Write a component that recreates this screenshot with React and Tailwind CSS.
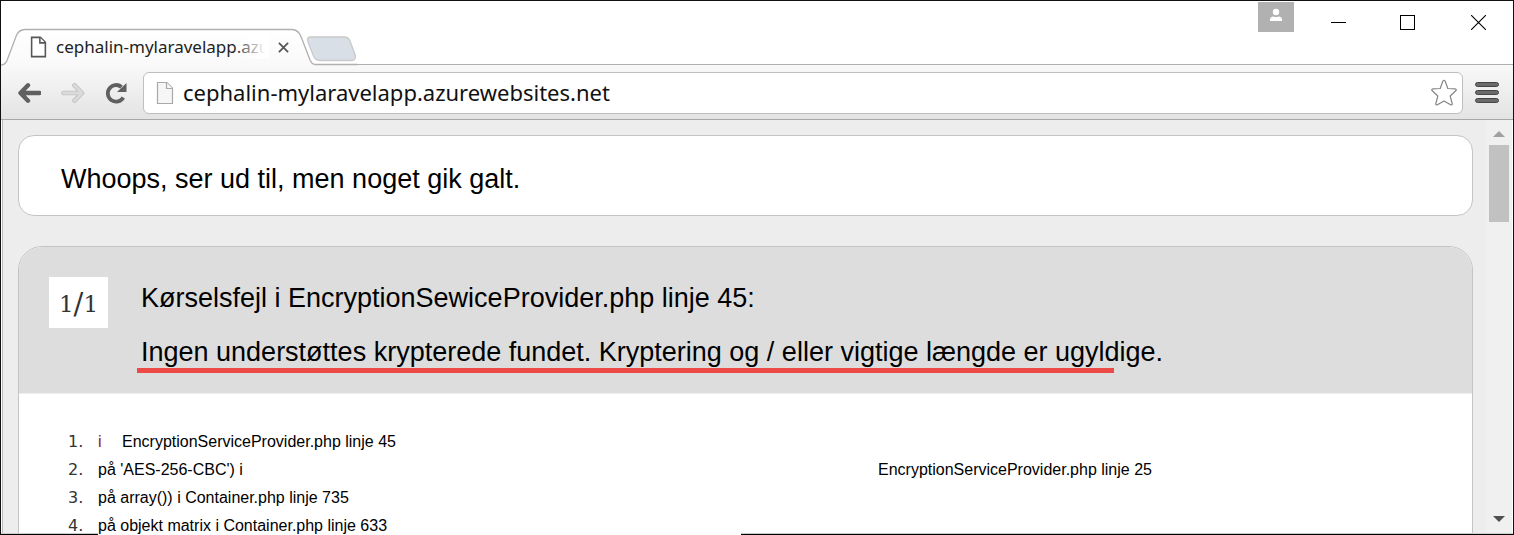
import React from 'react';

const frames = [
  { before: 'i', source: 'EncryptionServiceProvider.php linje 45', gap: 'w-6', accent: true },
  { before: "på 'AES-256-CBC') i", source: 'EncryptionServiceProvider.php linje 25', gap: 'w-[780px]' },
  { before: 'på array()) i Container.php linje 735' },
  { before: 'på objekt matrix i Container.php linje 633' },
];

function PageIcon({ className, stroke, width, fill }) {
  return (
    <svg viewBox="0 0 18 24" className={className} fill={fill} stroke={stroke} strokeWidth={width} aria-hidden="true">
      <path d="M1.5 1.5h9.5l5.5 5.5v15.500h-15z" />
      <path d="M10.500 1.500v6h6" />
    </svg>
  );
}

function TabStrip() {
  return (
    <header className="flex h-16 shrink-0 items-stretch bg-white">
      <div className="relative flex h-16 w-[357px] shrink-0 items-end">
        <svg viewBox="0 0 357 65" className="absolute left-0 top-0 h-[65px] w-[357px]" aria-hidden="true">
          <defs>
            <linearGradient id="tab" x1="0" y1="0" x2="0" y2="1">
              <stop offset="0" stopColor="#ffffff" />
              <stop offset="1" stopColor="#f9f9f9" />
            </linearGradient>
          </defs>
          <path d="M309 36h34q4.500 0 6 4l5 13.500q1.500 5.500-3 6h-32q-4.500 0-6.500-4.500l-5.500-14q-1.500-5 2-5z" fill="#d9dfe7" stroke="#c9c9c9" strokeWidth="1.300" />
          <path d="M0 64.500q4 0 6-5l9-24q2.500-7 9-7h267q6 0 9 7l9 23.500q2 5.500 5 5.500v1h-314z" fill="url(#tab)" />
          <path d="M0 64q4 0 6-4.500l9-24q2.500-7 9-7h267q6 0 9 7l9 23.500q2 4.500 5 4.500h43" fill="none" stroke="#b0b0b0" strokeWidth="1.300" />
        </svg>
        <div className="relative flex h-9 w-[295px] items-center pl-[29px]">
          <PageIcon className="h-[22px] w-[17px] shrink-0" stroke="#555555" width="1.700" fill="#ffffff" />
          <span className="relative ml-[9px] shrink-0 whitespace-nowrap text-[17px] leading-6 text-[#222222]">
            cephalin-mylaravelapp.azu
            <span className="absolute right-0 top-0 h-6 w-9 bg-linear-to-r from-white/0 to-white to-90%" />
          </span>
          <button type="button" aria-label="Close tab" className="ml-1 flex h-5 w-5 items-center justify-center">
            <svg viewBox="0 0 12 12" className="h-[11px] w-[11px]" stroke="#555555" strokeWidth="1.900" aria-hidden="true">
              <path d="M1 1l10 10M11 1L1 11" />
            </svg>
          </button>
        </div>
      </div>
      <div className="flex flex-1 items-start justify-end border-b border-[#b0b0b0]">
        <button type="button" aria-label="Profile" className="mt-px flex h-[30px] w-9 items-center justify-center bg-[#b1b1b1]">
          <svg viewBox="0 0 14 14" className="mb-1 h-[14px] w-[14px]" fill="#ffffff" aria-hidden="true">
            <circle cx="7" cy="4" r="3.200" />
            <path d="M1 13v-1.500Q1 8.700 4.500 8.400q2.500 1 5 0Q13 8.700 13 11.500V13z" />
          </svg>
        </button>
        <button type="button" aria-label="Minimize" className="ml-7 flex h-[42px] w-8 items-center justify-center">
          <span className="h-px w-[15px] bg-black" />
        </button>
        <button type="button" aria-label="Maximize" className="ml-[37px] flex h-[42px] w-8 items-center justify-center">
          <span className="h-[15px] w-[15px] border border-black" />
        </button>
        <button type="button" aria-label="Close" className="mr-[19px] ml-[39px] flex h-[42px] w-8 items-center justify-center">
          <svg viewBox="0 0 15 15" className="h-[15px] w-[15px]" stroke="#000000" strokeWidth="1.100" aria-hidden="true">
            <path d="M0 0l15 15M15 0L0 15" />
          </svg>
        </button>
      </div>
    </header>
  );
}

function Toolbar() {
  return (
    <nav className="flex h-[55px] shrink-0 items-center border-b border-[#a8a8a8] bg-linear-to-b from-[#f9f9f9] to-[#e3e3e3] pl-4 pt-px">
      <button type="button" aria-label="Back" className="h-6 w-6">
        <svg viewBox="0 0 24 24" className="h-6 w-6" fill="none" stroke="#606060" strokeWidth="4.400" strokeLinecap="round" strokeLinejoin="round" aria-hidden="true">
          <path d="M11 4.300L3.500 12l7.500 7.700M4.500 12h18" />
        </svg>
      </button>
      <button type="button" aria-label="Forward" className="ml-5 h-6 w-6">
        <svg viewBox="0 0 24 24" className="h-6 w-6" fill="none" strokeLinecap="round" strokeLinejoin="round" aria-hidden="true">
          <path d="M13.500 4.300L21 12l-7.500 7.700M20 12H2.500" stroke="#c2c2c2" strokeWidth="4.600" />
          <path d="M13.500 4.300L21 12l-7.500 7.700M20 12H2.500" stroke="#dadada" strokeWidth="2.800" />
        </svg>
      </button>
      <button type="button" aria-label="Reload" className="ml-[19px] h-6 w-6">
        <svg viewBox="0 0 24 24" className="h-6 w-6" aria-hidden="true">
          <path d="M19.300 16.500A8.300 8.300 0 1 1 17.500 6" fill="none" stroke="#606060" strokeWidth="3.800" />
          <path d="M22.500 2v9h-9.500z" fill="#606060" />
        </svg>
      </button>
      <label className="ml-[15px] flex h-[42px] flex-1 items-center rounded-md border border-[#bfbfbf] bg-white pl-3 pr-1">
        <PageIcon className="h-6 w-[18px] shrink-0" stroke="#a9a9a9" width="1.200" fill="#f6f6f6" />
        <input
          type="text"
          aria-label="Address"
          defaultValue="cephalin-mylaravelapp.azurewebsites.net"
          className="ml-[9px] h-9 min-w-0 flex-1 bg-transparent pb-[2px] text-[22px] text-[#111111] outline-none"
        />
        <button type="button" aria-label="Bookmark" className="h-7 w-7">
          <svg viewBox="0 0 28 28" className="h-7 w-7" fill="#ffffff" stroke="#858585" strokeWidth="1.200" strokeLinejoin="round" aria-hidden="true">
            <path d="M12.800 2.200Q14 .3 15.200 2.200L17.800 9.500l7.200.3q2 .4.8 2L20.200 17l2 7.600q.2 1.800-1.600 1.200L14 22l-6.600 3.800q-1.800.6-1.600-1.200l2-7.600-5.600-5.200q-1.200-1.600.8-2l7.200-.3z" />
          </svg>
        </button>
      </label>
      <button type="button" aria-label="Menu" className="ml-3 mr-[14px] flex h-[21px] w-6 flex-col justify-between">
        <span className="h-[5px] w-6 rounded-full border border-[#454545] bg-[#6a6a6a]" />
        <span className="h-[5px] w-6 rounded-full border border-[#454545] bg-[#6a6a6a]" />
        <span className="h-[5px] w-6 rounded-full border border-[#454545] bg-[#6a6a6a]" />
      </button>
    </nav>
  );
}

function Scrollbar() {
  return (
    <div className="flex w-[26px] shrink-0 flex-col items-center bg-[#f0f0f0] pt-[11px] pb-[13px]">
      <svg viewBox="0 0 12 6" className="h-[6px] w-3" fill="#a0a0a0" aria-hidden="true">
        <path d="M6 0l6 6H0z" />
      </svg>
      <div className="mt-2 h-[77px] w-5 bg-[#c1c1c1]" />
      <svg viewBox="0 0 12 6" className="mt-auto h-[6px] w-3" fill="#505050" aria-hidden="true">
        <path d="M0 0h12L6 6z" />
      </svg>
    </div>
  );
}

function ErrorPage() {
  return (
    <main className="min-w-0 flex-1 overflow-hidden pl-[15px] pr-[13px] pt-[15px] font-['Liberation_Sans',sans-serif] text-black">
      <section className="flex h-[81px] items-center rounded-2xl border border-[#c4c4c4] bg-white px-[42px] pt-[6px]">
        <h1 className="text-[27px] leading-8">Whoops, ser ud til, men noget gik galt.</h1>
      </section>
      <section className="mt-[30px] rounded-t-3xl border border-[#c4c4c4] bg-white">
        <div className="flex items-start rounded-t-[23px] border-b border-[#eeeeee] bg-[#dddddd] pb-5 pl-[30px] pt-[30px]">
          <span className="flex h-[51px] w-[59px] shrink-0 items-center justify-center bg-white pt-1 font-['DejaVu_Serif',serif] text-[23px] text-[#333333]">
            1<span className="text-[29px]">/</span>1
          </span>
          <div className="ml-[29px] min-w-0 pt-[5px] text-[27px] leading-8">
            <h2 className="pl-1">Kørselsfejl i EncryptionSewiceProvider.php linje 45:</h2>
            <p className="mt-[22px] whitespace-nowrap pl-1">
              Ingen understøttes krypterede fundet. Kryptering og / eller vigtige længde er ugyldige.
            </p>
            <div className="h-[5px] w-[977px] max-w-full bg-[#ec4b45]" />
          </div>
        </div>
        <ol className="pb-8 pl-[49px] pt-[34px] text-[16px] leading-7">
          {frames.map((frame, index) => (
            <li key={frame.before} className="flex h-7 items-baseline whitespace-nowrap">
              <span className="w-[30px] shrink-0 font-['DejaVu_Sans',sans-serif] text-[#333333]">{index + 1}.</span>
              <span className={frame.gap ? `${frame.gap} shrink-0 ${frame.accent ? 'text-[#8b1a1a]' : ''}` : ''}>{frame.before}</span>
              {frame.source && <span>{frame.source}</span>}
            </li>
          ))}
        </ol>
      </section>
    </main>
  );
}

export default function App() {
  return (
    <div className="relative flex h-screen flex-col overflow-hidden border-x border-t border-[#111111] bg-white font-['Noto_Sans',sans-serif]">
      <TabStrip />
      <Toolbar />
      <div className="ml-px mr-px flex min-h-0 flex-1 border-l border-[#bbbbbb] bg-[#ededed]">
        <ErrorPage />
        <Scrollbar />
      </div>
      <div className="pointer-events-none absolute inset-x-0 bottom-0 flex h-[2px]">
        <span className="w-[97px] border-b border-t border-b-black border-t-[#cccccc]" />
        <span className="w-[643px]" />
        <span className="flex-1 border-b border-t border-b-black border-t-[#cccccc]" />
      </div>
    </div>
  );
}
